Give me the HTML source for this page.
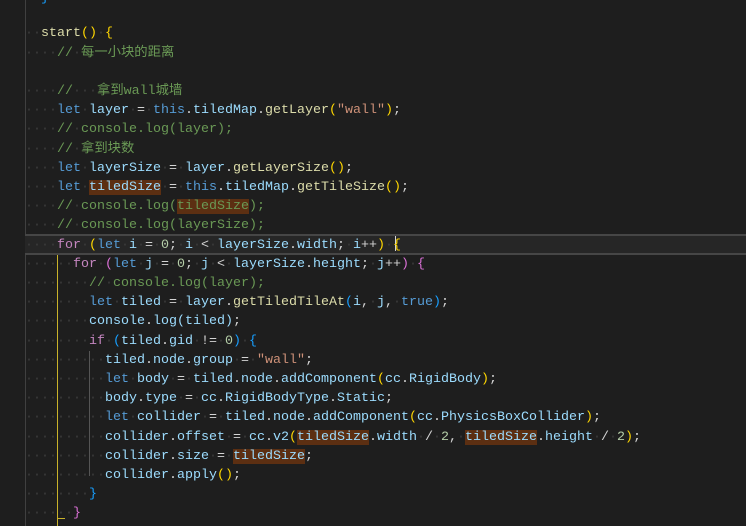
<!DOCTYPE html>
<html><head><meta charset="utf-8"><style>
html,body{margin:0;padding:0;background:#1e1e1e;width:746px;height:526px;overflow:hidden}
#ed{position:relative;width:746px;height:526px;font-family:"Liberation Mono","Noto Sans CJK SC",monospace;font-size:13.33px;color:#3c3c3c}
.l{position:absolute;left:25px;height:19.2px;line-height:19.2px;white-space:pre;margin-top:2px}
.k{color:#569cd6}.c{color:#6a9955}.v{color:#9cdcfe}.f{color:#dcdcaa}.s{color:#ce9178}.n{color:#b5cea8}.p{color:#d4d4d4}.m{color:#c586c0}.y{color:#ffd700}.o{color:#da70d6}.b{color:#179fff}.h{background:#5c2f12}
.g{position:absolute;width:1px}
</style></head><body><div id="ed">
<div class="g" style="left:25px;top:0;height:526px;background:#404040"></div>
<div style="position:absolute;left:25px;top:234px;width:721px;height:17px;border-top:2px solid #464646;border-bottom:2px solid #464646;background:#262626"></div>
<div class="g" style="left:57px;top:255px;height:271px;background:#c9b22a"></div>
<div style="position:absolute;left:57px;top:518px;width:8px;height:1px;background:#c9b22a"></div>
<div class="g" style="left:89px;top:351px;height:125px;background:#555"></div>
<div style="position:absolute;left:395px;top:236px;width:1px;height:15px;background:#d4d4d4"></div>

<div class="l" style="top:-13px">··<span class="b">}</span></div>
<div class="l" style="top:22.4px">··<span class="f">start</span><span class="y">()</span>·<span class="y">{</span></div>
<div class="l" style="top:41.6px">····<span class="c">//</span>·<span class="c">每一小块的距离</span></div>
<div class="l" style="top:80px">····<span class="c">//</span>···<span class="c">拿到wall城墙</span></div>
<div class="l" style="top:99.2px">····<span class="k">let</span>·<span class="v">layer</span>·<span class="p">=</span>·<span class="k">this</span><span class="p">.</span><span class="v">tiledMap</span><span class="p">.</span><span class="f">getLayer</span><span class="y">(</span><span class="s">"wall"</span><span class="y">)</span><span class="p">;</span></div>
<div class="l" style="top:118.4px">····<span class="c">//</span>·<span class="c">console.log(layer);</span></div>
<div class="l" style="top:137.6px">····<span class="c">//</span>·<span class="c">拿到块数</span></div>
<div class="l" style="top:156.8px">····<span class="k">let</span>·<span class="v">layerSize</span>·<span class="p">=</span>·<span class="v">layer</span><span class="p">.</span><span class="f">getLayerSize</span><span class="y">()</span><span class="p">;</span></div>
<div class="l" style="top:176px">····<span class="k">let</span>·<span class="v h">tiledSize</span>·<span class="p">=</span>·<span class="k">this</span><span class="p">.</span><span class="v">tiledMap</span><span class="p">.</span><span class="f">getTileSize</span><span class="y">()</span><span class="p">;</span></div>
<div class="l" style="top:195.2px">····<span class="c">//</span>·<span class="c">console.log(<span class="h">tiledSize</span>);</span></div>
<div class="l" style="top:214.4px">····<span class="c">//</span>·<span class="c">console.log(layerSize);</span></div>
<div class="l" style="top:233.6px">····<span class="m">for</span>·<span class="y">(</span><span class="k">let</span>·<span class="v">i</span>·<span class="p">=</span>·<span class="n">0</span><span class="p">;</span>·<span class="v">i</span>·<span class="p">&lt;</span>·<span class="v">layerSize</span><span class="p">.</span><span class="v">width</span><span class="p">;</span>·<span class="v">i</span><span class="p">++</span><span class="y">)</span>·<span class="y">{</span></div>
<div class="l" style="top:252.8px">······<span class="m">for</span>·<span class="o">(</span><span class="k">let</span>·<span class="v">j</span>·<span class="p">=</span>·<span class="n">0</span><span class="p">;</span>·<span class="v">j</span>·<span class="p">&lt;</span>·<span class="v">layerSize</span><span class="p">.</span><span class="v">height</span><span class="p">;</span>·<span class="v">j</span><span class="p">++</span><span class="o">)</span>·<span class="o">{</span></div>
<div class="l" style="top:272px">········<span class="c">//</span>·<span class="c">console.log(layer);</span></div>
<div class="l" style="top:291.2px">········<span class="k">let</span>·<span class="v">tiled</span>·<span class="p">=</span>·<span class="v">layer</span><span class="p">.</span><span class="f">getTiledTileAt</span><span class="b">(</span><span class="v">i</span><span class="p">,</span>·<span class="v">j</span><span class="p">,</span>·<span class="k">true</span><span class="b">)</span><span class="p">;</span></div>
<div class="l" style="top:310.4px">········<span class="v">console</span><span class="p">.</span><span class="v">log</span><span class="v">(</span><span class="v">tiled</span><span class="v">)</span><span class="p">;</span></div>
<div class="l" style="top:329.6px">········<span class="m">if</span>·<span class="b">(</span><span class="v">tiled</span><span class="p">.</span><span class="v">gid</span>·<span class="p">!=</span>·<span class="n">0</span><span class="b">)</span>·<span class="b">{</span></div>
<div class="l" style="top:348.8px">··········<span class="v">tiled</span><span class="p">.</span><span class="v">node</span><span class="p">.</span><span class="v">group</span>·<span class="p">=</span>·<span class="s">"wall"</span><span class="p">;</span></div>
<div class="l" style="top:368px">··········<span class="k">let</span>·<span class="v">body</span>·<span class="p">=</span>·<span class="v">tiled</span><span class="p">.</span><span class="v">node</span><span class="p">.</span><span class="v">addComponent</span><span class="y">(</span><span class="v">cc</span><span class="p">.</span><span class="v">RigidBody</span><span class="y">)</span><span class="p">;</span></div>
<div class="l" style="top:387.2px">··········<span class="v">body</span><span class="p">.</span><span class="v">type</span>·<span class="p">=</span>·<span class="v">cc</span><span class="p">.</span><span class="v">RigidBodyType</span><span class="p">.</span><span class="v">Static</span><span class="p">;</span></div>
<div class="l" style="top:406.4px">··········<span class="k">let</span>·<span class="v">collider</span>·<span class="p">=</span>·<span class="v">tiled</span><span class="p">.</span><span class="v">node</span><span class="p">.</span><span class="v">addComponent</span><span class="y">(</span><span class="v">cc</span><span class="p">.</span><span class="v">PhysicsBoxCollider</span><span class="y">)</span><span class="p">;</span></div>
<div class="l" style="top:425.6px">··········<span class="v">collider</span><span class="p">.</span><span class="v">offset</span>·<span class="p">=</span>·<span class="v">cc</span><span class="p">.</span><span class="v">v2</span><span class="y">(</span><span class="v h">tiledSize</span><span class="p">.</span><span class="v">width</span>·<span class="p">/</span>·<span class="n">2</span><span class="p">,</span>·<span class="v h">tiledSize</span><span class="p">.</span><span class="v">height</span>·<span class="p">/</span>·<span class="n">2</span><span class="y">)</span><span class="p">;</span></div>
<div class="l" style="top:444.8px">··········<span class="v">collider</span><span class="p">.</span><span class="v">size</span>·<span class="p">=</span>·<span class="v h">tiledSize</span><span class="p">;</span></div>
<div class="l" style="top:464px">··········<span class="v">collider</span><span class="p">.</span><span class="v">apply</span><span class="y">()</span><span class="p">;</span></div>
<div class="l" style="top:483.2px">········<span class="b">}</span></div>
<div class="l" style="top:502.4px">······<span class="o">}</span></div>
</div></body></html>
